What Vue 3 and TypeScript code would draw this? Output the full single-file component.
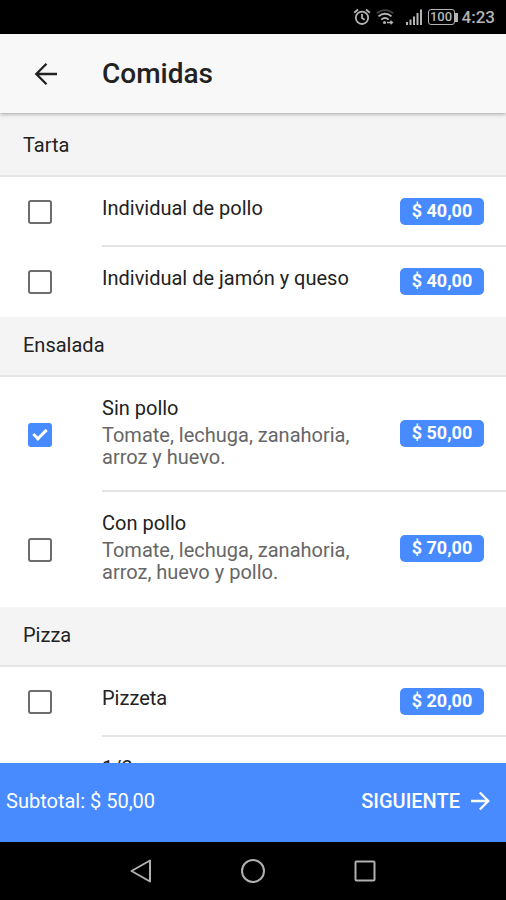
<script setup lang="ts">
import { computed, ref } from 'vue'

interface Dish {
  id: string
  name: string
  detail?: string
  price?: number
  checked: boolean
}

interface Section {
  title: string
  dishes: Dish[]
}

const sections = ref<Section[]>([
  {
    title: 'Tarta',
    dishes: [
      { id: 'tarta-pollo', name: 'Individual de pollo', price: 40, checked: false },
      { id: 'tarta-jamon', name: 'Individual de jamón y queso', price: 40, checked: false },
    ],
  },
  {
    title: 'Ensalada',
    dishes: [
      { id: 'sin-pollo', name: 'Sin pollo', detail: 'Tomate, lechuga, zanahoria, arroz y huevo.', price: 50, checked: true },
      { id: 'con-pollo', name: 'Con pollo', detail: 'Tomate, lechuga, zanahoria, arroz, huevo y pollo.', price: 70, checked: false },
    ],
  },
  {
    title: 'Pizza',
    dishes: [
      { id: 'pizzeta', name: 'Pizzeta', price: 20, checked: false },
      { id: 'media', name: '1/2', detail: '', checked: false },
    ],
  },
])

const money = (value: number): string => '$ ' + value.toFixed(2).replace('.', ',')

const subtotal = computed(() =>
  sections.value.flatMap((s) => s.dishes).reduce((sum, d) => sum + (d.checked ? (d.price ?? 0) : 0), 0),
)
</script>

<template>
  <div class="screen">
    <div class="status">
      <svg class="status-icon" width="18" height="18" viewBox="0 0 18 18" fill="none" stroke="currentColor" stroke-width="1.8">
        <circle cx="9" cy="9.8" r="6.2" />
        <path d="M9 6v4l2.6 1.8M1.2 4.8l3.8-3.3M16.800 4.800l-3.800-3.300" />
      </svg>
      <svg class="status-icon wifi" width="18" height="18" viewBox="0 0 18 18" fill="none" stroke="currentColor" stroke-width="1.9">
        <path d="M.8 5.4C5.5 1 12.500 1 17.200 5.400" stroke-opacity=".35" />
        <path d="M2.500 8.400c3.800-3.600 9.200-3.600 13 0M5.300 11.600c2.200-2 5.200-2 7.400 0" />
        <circle cx="8.500" cy="14.500" r="1.500" fill="currentColor" stroke="none" />
        <path d="M11 14.500h5.500M14.500 12.800l2 1.700-2 1.700" stroke-width="1.300" />
      </svg>
      <svg class="status-icon" width="18" height="18" viewBox="0 0 18 18" fill="currentColor">
        <path d="M1 14h2v3H1zM4.500 11.500h2V17h-2zM8 8.500h2V17H8zM11.500 5h2v12h-2zM15 1.500h2V17h-2z" />
      </svg>
      <span class="battery"><span class="level">100</span></span>
      <span class="clock">4:23</span>
    </div>

    <header class="toolbar">
      <button class="back" type="button" aria-label="Volver">
        <svg width="24" height="24" viewBox="0 0 24 24" fill="none" stroke="currentColor" stroke-width="2.300">
          <path d="M23 12H2.500M12.500 1.800L2.300 12l10.200 10.200" />
        </svg>
      </button>
      <h1>Comidas</h1>
    </header>

    <main class="list">
      <section v-for="section in sections" :key="section.title">
        <h2>{{ section.title }}</h2>
        <div v-for="dish in section.dishes" :key="dish.id" class="row">
          <input :id="dish.id" v-model="dish.checked" type="checkbox" />
          <div class="body">
            <label :for="dish.id">
              <span class="name">{{ dish.name }}</span>
              <span v-if="dish.detail !== undefined" class="detail">{{ dish.detail }}</span>
            </label>
            <span v-if="dish.price !== undefined" class="price">{{ money(dish.price) }}</span>
          </div>
        </div>
      </section>
    </main>

    <footer class="summary">
      <span>Subtotal: {{ money(subtotal) }}</span>
      <button class="next" type="button">
        SIGUIENTE
        <svg width="20" height="20" viewBox="0 0 20 20" fill="none" stroke="currentColor" stroke-width="2.300">
          <path d="M1 10h17M9.800 1.500l8.500 8.500-8.500 8.500" />
        </svg>
      </button>
    </footer>

    <nav class="system">
      <button type="button" aria-label="Atrás">
        <svg width="26" height="26" viewBox="0 0 26 26" fill="none" stroke="currentColor" stroke-width="2" stroke-linejoin="round">
          <path d="M22 2.500v21L3.500 13z" />
        </svg>
      </button>
      <button type="button" aria-label="Inicio">
        <svg width="26" height="26" viewBox="0 0 26 26" fill="none" stroke="currentColor" stroke-width="2">
          <circle cx="13" cy="13" r="11" />
        </svg>
      </button>
      <button type="button" aria-label="Recientes">
        <svg width="26" height="26" viewBox="0 0 26 26" fill="none" stroke="currentColor" stroke-width="2">
          <rect x="3.500" y="3.500" width="19" height="19" rx="1" />
        </svg>
      </button>
    </nav>
  </div>
</template>

<style>
body {
  margin: 0;
}
</style>

<style scoped>
.screen {
  display: flex;
  flex-direction: column;
  height: 100vh;
  overflow: hidden;
  background: #fff;
  color: #222;
  font-family: Roboto, "Liberation Sans", sans-serif;
  font-size: 20px;
  line-height: 24px;
}

button {
  display: flex;
  align-items: center;
  padding: 0;
  border: 0;
  background: none;
  color: inherit;
  font: inherit;
}

.status {
  display: flex;
  flex: none;
  align-items: center;
  justify-content: flex-end;
  height: 34px;
  padding-right: 11px;
  background: #000;
  color: #b4b4b4;
}

.status-icon {
  margin-right: 5px;
}

.wifi {
  margin-right: 11px;
}

.battery {
  display: flex;
  align-items: center;
  margin-right: 4px;
}

.battery::after {
  content: "";
  width: 3px;
  height: 9px;
  background: currentColor;
}

.level {
  box-sizing: border-box;
  width: 27px;
  border: 1px solid currentColor;
  border-radius: 3px;
  font-size: 13px;
  font-weight: 500;
  line-height: 14px;
  text-align: center;
}

.clock {
  font-size: 17px;
  font-weight: 500;
}

.toolbar {
  display: flex;
  flex: none;
  align-items: center;
  position: relative;
  height: 79px;
  background: #f8f8f8;
  box-shadow: 0 1px 4px rgba(0, 0, 0, 0.35);
}

.back {
  box-sizing: border-box;
  width: 102px;
  padding-left: 34px;
}

h1 {
  margin: 0;
  font-size: 28px;
  font-weight: 500;
  line-height: 36px;
}

.list {
  flex: 1;
  min-height: 0;
  overflow: hidden;
  padding-top: 4px;
  background: linear-gradient(#f4f4f4 4px, #fff 4px);
}

h2 {
  box-sizing: border-box;
  height: 60px;
  margin: 0;
  padding: 16px 23px;
  border-bottom: 2px solid #e4e4e4;
  background: #f4f4f4;
  font-size: 20px;
  font-weight: 400;
  line-height: 24px;
}

.row {
  display: flex;
  align-items: center;
  padding-left: 28px;
}

input {
  appearance: none;
  display: grid;
  flex: none;
  place-items: center;
  box-sizing: border-box;
  width: 24px;
  height: 24px;
  margin: 0 50px 0 0;
  border: 2px solid #6c6c6c;
  border-radius: 3px;
}

input:checked {
  border-color: #488aff;
  background: #488aff;
}

input:checked::after {
  content: "";
  width: 5px;
  height: 11px;
  margin-bottom: 4px;
  border: solid #fff;
  border-width: 0 3px 3px 0;
  transform: rotate(45deg);
}

.body {
  display: flex;
  flex: 1;
  align-items: center;
  justify-content: space-between;
  box-sizing: border-box;
  min-height: 70px;
  padding-right: 22px;
  border-bottom: 2px solid #e4e4e4;
}

.row:last-child .body {
  border-bottom-color: transparent;
}

label {
  flex: 1;
  align-self: flex-start;
  max-width: 270px;
  padding: 19px 0 22px;
}

.name,
.detail {
  display: block;
}

.detail {
  min-height: 44px;
  padding-top: 4px;
  color: #666;
  line-height: 22px;
}

.price {
  box-sizing: border-box;
  height: 27px;
  min-width: 84px;
  border-radius: 5px;
  background: #488aff;
  color: #fff;
  font-size: 18px;
  font-weight: 700;
  line-height: 25px;
  text-align: center;
}

.summary {
  display: flex;
  flex: none;
  align-items: center;
  justify-content: space-between;
  box-sizing: border-box;
  height: 79px;
  padding: 0 16px 4px 6px;
  background: #488aff;
  color: #fff;
}

.next {
  gap: 10px;
  font-weight: 500;
}

.system {
  display: flex;
  flex: none;
  align-items: center;
  justify-content: center;
  gap: 86px;
  height: 58px;
  background: #000;
  color: #b0b0b0;
}
</style>
